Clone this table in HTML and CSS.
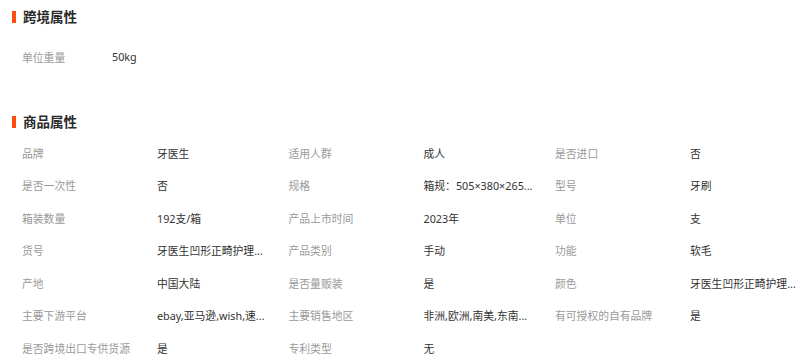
FILE: index.html
```html
<!DOCTYPE html>
<html lang="zh-CN">
<head>
<meta charset="utf-8">
<link rel="stylesheet" href="styles.css">
</head>
<body>
<div class="page">
  <section class="sec sec-cross">
    <h2 class="title"><span class="bar"></span>跨境属性</h2>
    <div class="list list-cross">
      <div class="item">
        <span class="label label-narrow">单位重量</span>
        <span class="value">50kg</span>
      </div>
    </div>
  </section>
  <section class="sec sec-goods">
    <h2 class="title"><span class="bar"></span>商品属性</h2>
    <div class="grid">
      <div class="item"><span class="label">品牌</span><span class="value">牙医生</span></div>
      <div class="item"><span class="label">适用人群</span><span class="value">成人</span></div>
      <div class="item"><span class="label">是否进口</span><span class="value">否</span></div>

      <div class="item"><span class="label">是否一次性</span><span class="value">否</span></div>
      <div class="item"><span class="label">规格</span><span class="value">箱规：505×380×265...</span></div>
      <div class="item"><span class="label">型号</span><span class="value">牙刷</span></div>

      <div class="item"><span class="label">箱装数量</span><span class="value">192支/箱</span></div>
      <div class="item"><span class="label">产品上市时间</span><span class="value">2023年</span></div>
      <div class="item"><span class="label">单位</span><span class="value">支</span></div>

      <div class="item"><span class="label">货号</span><span class="value">牙医生凹形正畸护理...</span></div>
      <div class="item"><span class="label">产品类别</span><span class="value">手动</span></div>
      <div class="item"><span class="label">功能</span><span class="value">软毛</span></div>

      <div class="item"><span class="label">产地</span><span class="value">中国大陆</span></div>
      <div class="item"><span class="label">是否量贩装</span><span class="value">是</span></div>
      <div class="item"><span class="label">颜色</span><span class="value">牙医生凹形正畸护理...</span></div>

      <div class="item"><span class="label">主要下游平台</span><span class="value">ebay,亚马逊,wish,速...</span></div>
      <div class="item"><span class="label">主要销售地区</span><span class="value">非洲,欧洲,南美,东南...</span></div>
      <div class="item"><span class="label">有可授权的自有品牌</span><span class="value">是</span></div>

      <div class="item"><span class="label">是否跨境出口专供货源</span><span class="value">是</span></div>
      <div class="item"><span class="label">专利类型</span><span class="value">无</span></div>
    </div>
  </section>
</div>
</body>
</html>
```

FILE: styles.css
```css
html, body {
  margin: 0;
  padding: 0;
  background: #ffffff;
}
body {
  font-family: "Noto Sans", "Noto Sans CJK SC", sans-serif;
  font-size: 10.8px;
  color: #333333;
  overflow: hidden;
}
.page {
  width: 811px;
  height: 362px;
  overflow: hidden;
}
.title {
  display: flex;
  align-items: center;
  margin: 0 0 0 12px;
  height: 20px;
  font-size: 13.5px;
  font-weight: bold;
  color: #2a2a2a;
  line-height: 20px;
}
.bar {
  display: inline-block;
  width: 4px;
  height: 12px;
  background: #ff4d0d;
  margin-right: 7px;
}
.sec-cross {
  padding-top: 7px;
}
.list-cross {
  padding-top: 13.5px;
  padding-left: 22px;
}
.sec-goods {
  padding-top: 38.75px;
}
.grid {
  padding-top: 4.75px;
  padding-left: 22px;
  display: grid;
  grid-template-columns: 266.5px 266.5px 266.5px;
  grid-auto-rows: 32.5px;
}
.item {
  display: flex;
  align-items: center;
  height: 32.5px;
  white-space: nowrap;
}
.label {
  width: 135px;
  flex: none;
  color: #9a9a9a;
}
.label-narrow {
  width: 90px;
}
.value {
  color: #333333;
}
```
